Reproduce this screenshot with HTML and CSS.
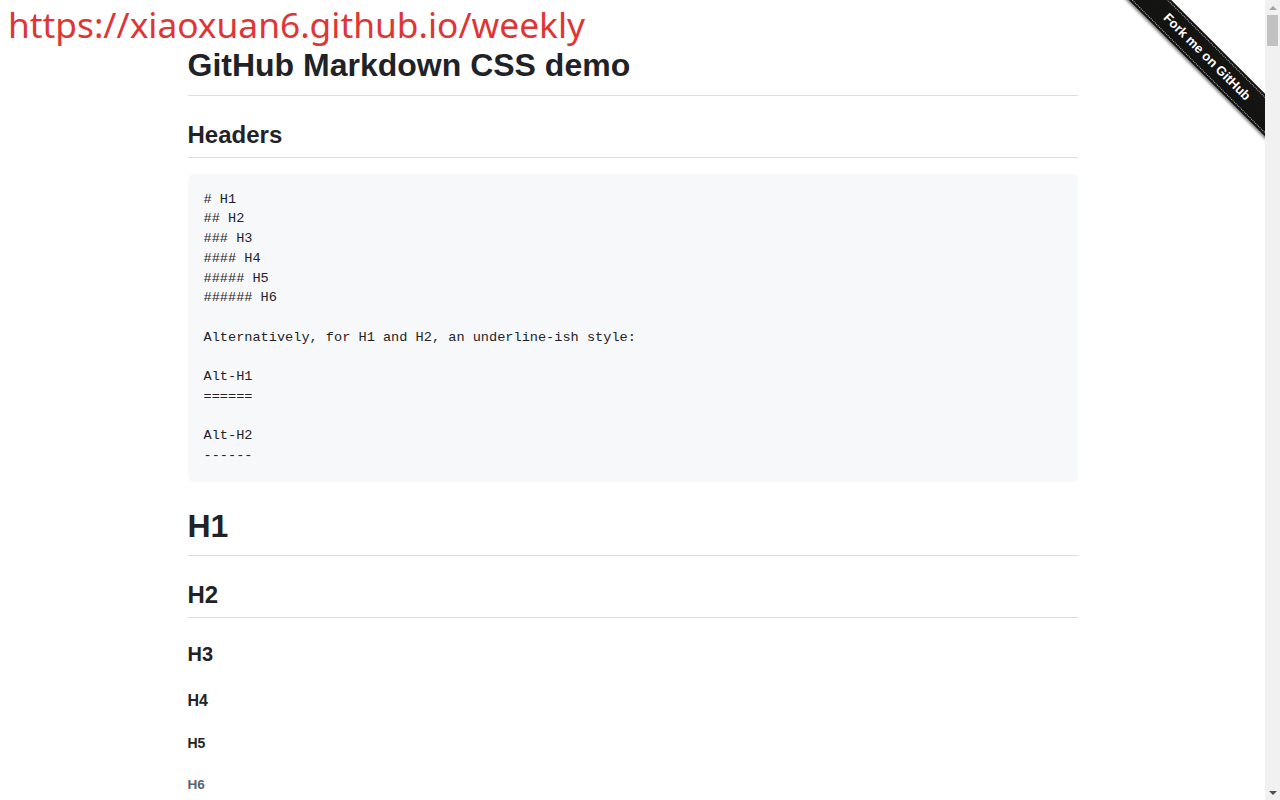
FILE: index.html
```html
<!DOCTYPE html>
<html lang="en">
<head>
<meta charset="utf-8">
<title>GitHub Markdown CSS demo</title>
<link rel="stylesheet" href="styles.css">
</head>
<body>
<div class="viewport">
  <div class="page">
    <div class="site-url">https://xiaoxuan6.github.io/weekly</div>
    <a class="github-fork-ribbon" href="#" title="Fork me on GitHub"><span class="ribbon-text">Fork me on GitHub</span></a>
    <article class="markdown-body">
<h1>GitHub Markdown CSS demo</h1>
<h2>Headers</h2>
<pre><code><span class="ln"># H1</span>
<span class="ln">## H2</span>
<span class="ln">### H3</span>
<span class="ln">#### H4</span>
<span class="ln">##### H5</span>
<span class="ln">###### H6</span>

<span class="ln">Alternatively, for H1 and H2, an underline-ish style:</span>

<span class="ln">Alt-H1</span>
<span class="ln">======</span>

<span class="ln">Alt-H2</span>
<span class="ln">------</span></code></pre>
<h1>H1</h1>
<h2>H2</h2>
<h3>H3</h3>
<h4>H4</h4>
<h5>H5</h5>
<h6>H6</h6>
    </article>
  </div>
  <div class="scrollbar" aria-hidden="true">
    <div class="sb-arrow sb-up"></div>
    <div class="sb-track"><div class="sb-thumb"></div></div>
    <div class="sb-arrow sb-down"></div>
  </div>
</div>
</body>
</html>
```
FILE: styles.css
```css
html, body {
  margin: 0;
  padding: 0;
  background: #ffffff;
  height: 800px;
  overflow: hidden;
}

.viewport {
  display: flex;
  height: 800px;
}

.page {
  position: relative;
  flex: 1;
  min-width: 0;
  height: 800px;
  overflow: hidden;
}

/* fake native scrollbar */
.scrollbar {
  width: 15px;
  flex: none;
  display: flex;
  flex-direction: column;
  background: #f1f1f1;
}

.sb-arrow {
  height: 15px;
  flex: none;
  display: flex;
  align-items: center;
  justify-content: center;
}

.sb-arrow::before {
  content: "";
  width: 0;
  height: 0;
  border-left: 4px solid transparent;
  border-right: 4px solid transparent;
}

.sb-up::before {
  border-bottom: 4px solid #a3a3a3;
}

.sb-down::before {
  border-top: 4px solid #505050;
}

.sb-track {
  flex: 1;
  padding: 0 2px;
}

.sb-thumb {
  height: 31px;
  background: #c1c1c1;
}

.site-url {
  position: absolute;
  top: 0;
  left: 8px;
  z-index: 10000;
  font-family: "Noto Sans", "Open Sans", sans-serif;
  font-size: 35.3px;
  line-height: 48px;
  color: #e03535;
  white-space: nowrap;
}

.github-fork-ribbon {
  width: 12.1em;
  height: 12.1em;
  position: absolute;
  overflow: hidden;
  top: 0;
  right: 0;
  z-index: 9999;
  font-size: 13px;
  text-decoration: none;
}

.github-fork-ribbon::before,
.ribbon-text {
  position: absolute;
  display: block;
  width: 15.38em;
  height: 1.54em;
  top: 3.23em;
  right: -3.23em;
  box-sizing: content-box;
  transform: rotate(45deg);
}

.github-fork-ribbon::before {
  content: "";
  padding: .38em 0;
  background-color: #151513;
  background-image: linear-gradient(to bottom, rgba(0, 0, 0, 0), rgba(0, 0, 0, 0.15));
  box-shadow: 0 .15em .23em 0 rgba(0, 0, 0, 0.5);
}

.ribbon-text {
  color: #fff;
  font: 700 1em "Liberation Sans", Arial, sans-serif;
  line-height: 1.54em;
  text-shadow: 0 -.08em rgba(0, 0, 0, 0.5);
  text-align: center;
  padding: .15em 0;
  margin: .15em 0;
  border-width: .08em 0;
  border-style: dotted;
  border-color: rgba(255, 255, 255, 0.7);
  white-space: nowrap;
}

.markdown-body {
  box-sizing: border-box;
  min-width: 200px;
  max-width: 980px;
  margin: 0 auto;
  padding: 45px;
  color: #1f2328;
  font-family: -apple-system, "Segoe UI", "Liberation Sans", Helvetica, Arial, sans-serif;
  font-size: 16px;
  line-height: 1.5;
  word-wrap: break-word;
}

.markdown-body > *:first-child {
  margin-top: 0 !important;
}

.markdown-body h1,
.markdown-body h2,
.markdown-body h3,
.markdown-body h4,
.markdown-body h5,
.markdown-body h6 {
  margin-top: 24px;
  margin-bottom: 16px;
  font-weight: 600;
  line-height: 1.25;
}

.markdown-body h1 {
  font-size: 2em;
  padding-bottom: .3em;
  border-bottom: 1px solid #d8dee4;
}

.markdown-body h2 {
  font-size: 1.5em;
  padding-bottom: .3em;
  border-bottom: 1px solid #d8dee4;
}

.markdown-body h3 { font-size: 1.25em; }
.markdown-body h4 { font-size: 1em; }
.markdown-body h5 { font-size: .875em; }
.markdown-body h6 { font-size: .85em; color: #59636e; }

.markdown-body pre {
  margin-top: 0;
  margin-bottom: 16px;
  padding: 16px;
  overflow: auto;
  font-family: ui-monospace, SFMono-Regular, "SF Mono", Menlo, Consolas, "Liberation Mono", monospace;
  font-size: 85%;
  line-height: 1.45;
  color: #1f2328;
  background-color: #f6f8fa;
  border-radius: 6px;
}

.markdown-body pre code {
  font-family: inherit;
  font-size: 100%;
  padding: 0;
  margin: 0;
  background: transparent;
  white-space: pre;
}
```
